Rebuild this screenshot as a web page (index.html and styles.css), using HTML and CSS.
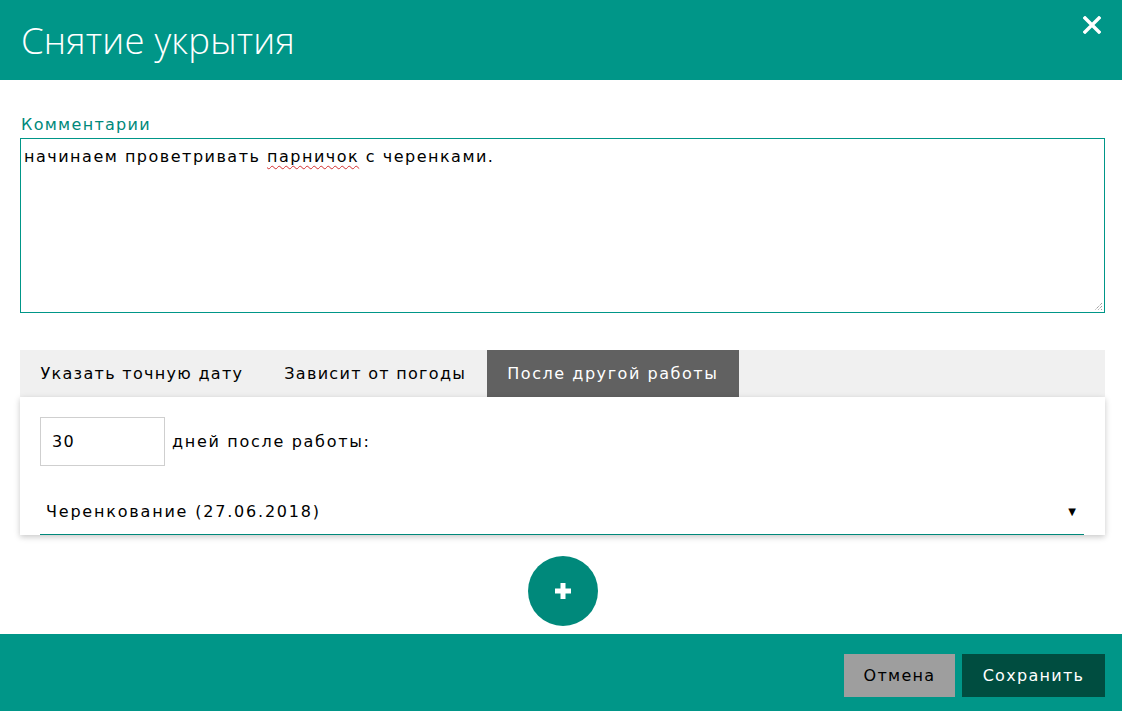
FILE: index.html
```html
<!DOCTYPE html>
<html lang="ru">
<head>
<meta charset="utf-8">
<title>Снятие укрытия</title>
<link rel="stylesheet" href="styles.css">
</head>
<body>
<div class="dialog">
  <header class="header">
    <h1 class="title">Снятие укрытия</h1>
    <button class="close" aria-label="Закрыть">
      <svg width="18" height="18" viewBox="0 0 18 18"><path d="M2 2 L16 16 M16 2 L2 16" stroke="#fff" stroke-width="3.4" stroke-linecap="square"/></svg>
    </button>
  </header>
  <main class="main">
    <label class="label">Комментарии</label>
    <div class="textarea">начинаем проветривать <span class="misspelled">парничок</span> с черенками.<span class="grip"><svg width="10" height="10" viewBox="0 0 10 10"><path d="M9 2 L2 9 M9 5 L5 9 M9 8 L8 9" stroke="#777" stroke-width="1" stroke-dasharray="1 1"/></svg></span></div>
    <div class="tabs">
      <div class="tab">Указать точную дату</div>
      <div class="tab">Зависит от погоды</div>
      <div class="tab active">После другой работы</div>
    </div>
    <div class="panel">
      <div class="row">
        <div class="num">30</div>
        <span class="row-label">дней после работы:</span>
      </div>
      <div class="select">
        <span class="select-text">Черенкование (27.06.2018)</span>
        <span class="arrow">▼</span>
      </div>
    </div>
    <div class="add-wrap">
      <button class="add" aria-label="Добавить">
        <svg width="20" height="20" viewBox="0 0 20 20"><path d="M10 2 V18 M2 10 H18" stroke="#fff" stroke-width="5"/></svg>
      </button>
    </div>
  </main>
  <footer class="footer">
    <button class="btn cancel">Отмена</button>
    <button class="btn save">Сохранить</button>
  </footer>
</div>
</body>
</html>
```
FILE: styles.css
```css
* { box-sizing: border-box; }
html, body { margin: 0; padding: 0; }
body {
  font-family: "DejaVu Sans", Verdana, sans-serif;
  font-size: 16px;
  letter-spacing: 1.3px;
  color: #000;
  background: #fff;
}
.dialog {
  width: 1122px;
  height: 711px;
  display: flex;
  flex-direction: column;
  overflow: hidden;
}
.header {
  flex: 0 0 80px;
  height: 80px;
  background: #009688;
  display: flex;
  align-items: flex-start;
  justify-content: space-between;
  padding: 0 21px;
}
.title {
  margin: 0;
  padding-top: 16px;
  font-family: "Open Sans", sans-serif;
  font-weight: 300;
  font-size: 36.5px;
  line-height: 48px;
  color: #fff;
  letter-spacing: 0.2px;
}
.close {
  background: none;
  border: 0;
  padding: 0;
  margin-top: 16px;
  width: 18px;
  height: 18px;
  cursor: pointer;
}
.close svg { display: block; }
.main {
  flex: 1 1 auto;
  min-height: 0;
  padding: 35px 17px 0 20px;
  display: flex;
  flex-direction: column;
}
.label {
  display: block;
  color: #00897b;
  line-height: 20px;
  height: 23px;
  padding-left: 1px;
}
.textarea {
  position: relative;
  flex: 0 0 175px;
  height: 175px;
  border: 1px solid #009688;
  padding: 8px 3px;
  line-height: 20px;
  letter-spacing: 1.5px;
}
.misspelled {
  text-decoration: underline wavy #d32f2f;
  text-decoration-thickness: 1px;
  text-underline-offset: 3px;
}
.grip {
  position: absolute;
  right: 1px;
  bottom: 1px;
  width: 10px;
  height: 10px;
}
.grip svg { display: block; }
.tabs {
  margin-top: 37px;
  flex: 0 0 47px;
  height: 47px;
  background: #f0f0f0;
  display: flex;
}
.tab {
  padding: 0 20.5px;
  line-height: 48px;
}
.tab.active {
  background: #616161;
  color: #fff;
  letter-spacing: 1.55px;
}
.panel {
  flex: 0 0 auto;
  background: #fff;
  box-shadow: 0 2px 6px rgba(0,0,0,0.22);
  padding: 20px 21px 0 20px;
}
.row {
  display: flex;
  align-items: center;
  height: 49px;
}
.num {
  width: 125px;
  height: 49px;
  border: 1px solid #cfcfcf;
  padding-left: 11px;
  line-height: 47px;
}
.row-label {
  margin-left: 7px;
  letter-spacing: 1.7px;
}
.select {
  margin-top: 20px;
  height: 49px;
  border-bottom: 1px solid #00897b;
  display: flex;
  justify-content: space-between;
  align-items: center;
  padding: 2px 8px 0 6px;
}
.select-text {
  letter-spacing: 1.8px;
}
.arrow {
  font-size: 10px;
  letter-spacing: 0;
}
.add-wrap {
  display: flex;
  justify-content: center;
  padding-top: 21px;
}
.add {
  width: 70px;
  height: 70px;
  border-radius: 50%;
  border: 0;
  background: #00897b;
  display: flex;
  align-items: center;
  justify-content: center;
  padding: 0;
  cursor: pointer;
}
.footer {
  flex: 0 0 77px;
  height: 77px;
  background: #009688;
  display: flex;
  justify-content: flex-end;
  align-items: flex-start;
  padding: 20px 17px 0 0;
  gap: 7px;
}
.btn {
  height: 43px;
  border: 0;
  font-family: "DejaVu Sans", Verdana, sans-serif;
  font-size: 16px;
  letter-spacing: 1.3px;
  padding: 0;
  cursor: pointer;
}
.cancel {
  width: 111px;
  background: #9e9e9e;
  color: #000;
}
.save {
  width: 143px;
  background: #004d40;
  color: #fff;
}
```
